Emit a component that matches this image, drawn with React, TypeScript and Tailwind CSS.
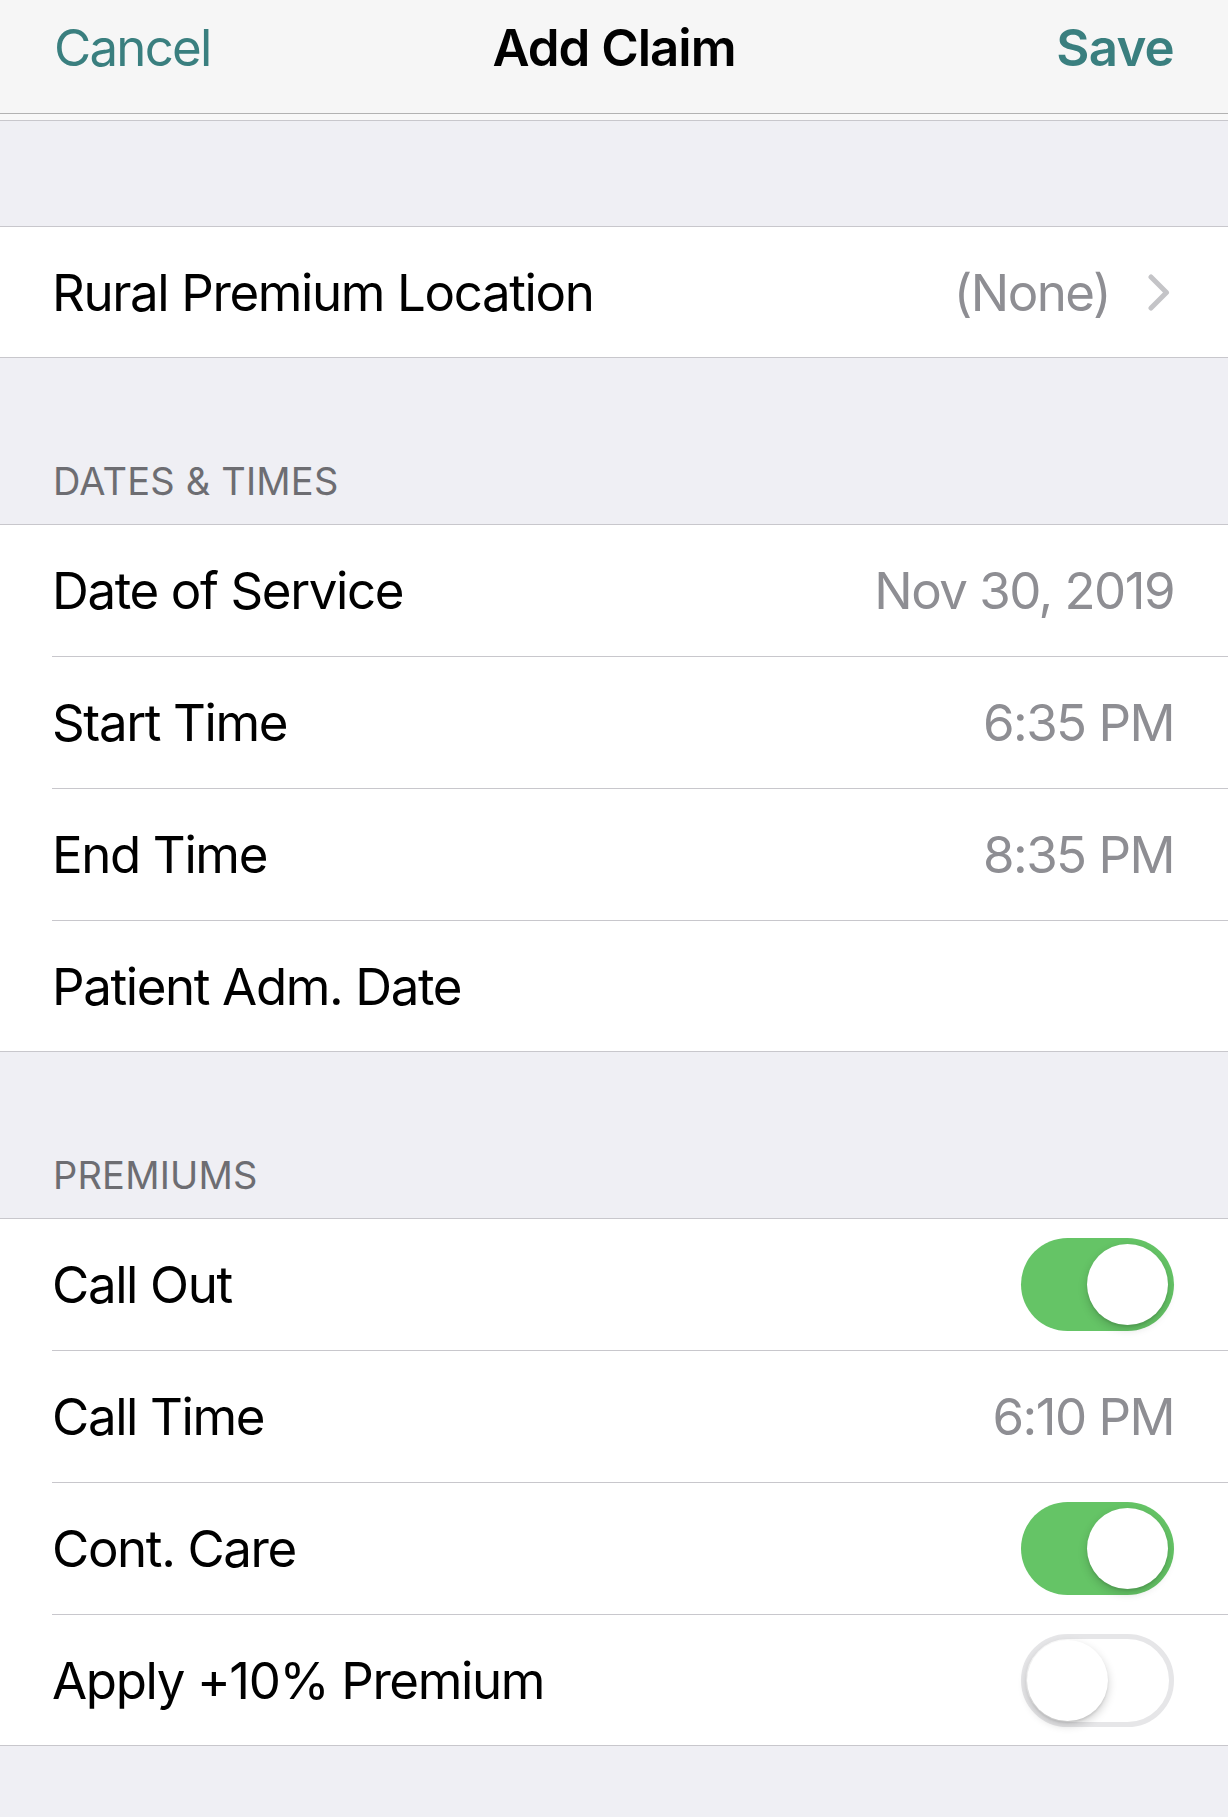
import React from 'react';

type Row =
  | { label: string; value?: string; kind: 'value' }
  | { label: string; on: boolean; kind: 'toggle' };

const datesRows: Row[] = [
  { label: 'Date of Service', value: 'Nov 30, 2019', kind: 'value' },
  { label: 'Start Time', value: '6:35 PM', kind: 'value' },
  { label: 'End Time', value: '8:35 PM', kind: 'value' },
  { label: 'Patient Adm. Date', kind: 'value' },
];

const premiumRows: Row[] = [
  { label: 'Call Out', on: true, kind: 'toggle' },
  { label: 'Call Time', value: '6:10 PM', kind: 'value' },
  { label: 'Cont. Care', on: true, kind: 'toggle' },
  { label: 'Apply +10% Premium', on: false, kind: 'toggle' },
];

const Toggle: React.FC<{ on: boolean }> = ({ on }) => {
  if (on) {
    return (
      <div className="w-[153px] h-[93px] rounded-full bg-[#65c466] flex items-center justify-end pr-[6px]">
        <div className="w-[81px] h-[81px] rounded-full bg-white shadow-[0_4px_10px_rgba(0,0,0,0.18),0_2px_2px_rgba(0,0,0,0.08)]" />
      </div>
    );
  }
  return (
    <div className="w-[153px] h-[93px] rounded-full border-[5px] border-[#e6e6e8] bg-white flex items-center justify-start pl-[1px]">
      <div className="w-[81px] h-[81px] rounded-full bg-white shadow-[0_4px_10px_rgba(0,0,0,0.2),0_2px_2px_rgba(0,0,0,0.08)]" />
    </div>
  );
};

const Chevron: React.FC = () => (
  <svg width="22" height="37" viewBox="0 0 22 37" fill="none">
    <polyline points="3,3 18.5,18.5 3,34" stroke="#c4c4c7" strokeWidth="5" strokeLinecap="round" strokeLinejoin="round" />
  </svg>
);

const SectionHeader: React.FC<{ title: string }> = ({ title }) => (
  <div className="pt-[104px] pb-[24px] pl-[53px] text-[38px] leading-none text-[#6d6d72] tracking-[0.005em]">
    {title}
  </div>
);

const Group: React.FC<{ rows: Row[] }> = ({ rows }) => (
  <div className="bg-white border-y border-[#c8c7cc]">
    {rows.map((row, i) => {
      const last = i === rows.length - 1;
      return (
        <div key={row.label} className="pl-[52px]">
          <div
            className={
              'flex items-center justify-between pr-[54px] ' +
              (last ? 'h-[130px]' : 'h-[132px] border-b border-[#c8c7cc]')
            }
          >
            <span className="text-[51px] leading-none text-black tracking-[-0.027em]">{row.label}</span>
            {row.kind === 'toggle' ? (
              <Toggle on={row.on} />
            ) : (
              <span className="text-[51px] leading-none text-[#8e8e93] tracking-[-0.03em]">{row.value}</span>
            )}
          </div>
        </div>
      );
    })}
  </div>
);

export default function App() {
  return (
    <div
      className="w-[1228px] min-h-[1817px] bg-[#efeff4] flex flex-col"
      style={{ fontFamily: 'Inter, "Noto Sans", sans-serif' }}
    >
      {/* Navigation bar */}
      <div className="bg-[#f6f6f6] border-b border-[#b2b2b2]">
        <div className="h-[94px] mb-[19px] px-[54px] grid grid-cols-3 items-center">
          <span className="text-[51px] leading-none text-[#3a7f7f] tracking-[-0.035em]">Cancel</span>
          <span className="text-[51px] leading-none font-semibold text-black text-center tracking-[-0.02em]">Add Claim</span>
          <span className="text-[51px] leading-none font-semibold text-[#3a7f7f] text-right tracking-[-0.015em]">Save</span>
        </div>
      </div>
      <div className="h-[7px] bg-[#f8f8f8] border-b border-[#c8c7cc]" />

      {/* Rural premium */}
      <div className="h-[105px]" />
      <div className="bg-white border-y border-[#c8c7cc] pl-[52px] pr-[58px] h-[132px] flex items-center justify-between">
        <span className="text-[51px] leading-none text-black tracking-[-0.027em]">Rural Premium Location</span>
        <div className="flex items-center gap-[38px]">
          <span className="text-[51px] leading-none text-[#8e8e93] tracking-[-0.03em]">(None)</span>
          <Chevron />
        </div>
      </div>

      <SectionHeader title="DATES & TIMES" />
      <Group rows={datesRows} />

      <SectionHeader title="PREMIUMS" />
      <Group rows={premiumRows} />

      <div className="flex-1" />
    </div>
  );
}
